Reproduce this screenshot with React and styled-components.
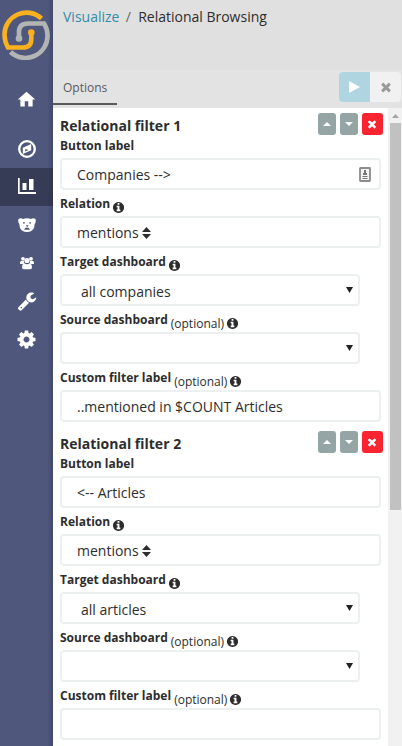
import React from "react";
import styled, { createGlobalStyle } from "styled-components";
import { MdHome } from "react-icons/md";

const Global = createGlobalStyle`
  * { box-sizing: border-box; }
  body { margin: 0; background: #fff; color: #2d2d2d; font-family: "Open Sans", "Noto Sans", sans-serif; font-size: 14px; overflow: hidden; }
  svg { display: block; flex: none; }
`;

const Page = styled.div`display: flex; width: 402px; height: 746px; overflow: hidden;`;
const Sidebar = styled.nav`
  width: 53px; flex: none; color: #fff;
  background: linear-gradient(to right, transparent 47px, rgba(25, 30, 60, 0.25)), #4f587c;
`;
const LogoBox = styled.div`height: 80px; padding: 10px 0 0 1px;`;
const NavItem = styled.a`
  display: flex; align-items: center; justify-content: center; height: 38px;
  margin-bottom: ${(p) => p.$gap || 0}px;
  background: ${(p) => (p.$active ? "rgba(32, 32, 48, 0.5)" : "transparent")};
`;
const Main = styled.main`flex: 1; min-width: 0; display: flex; flex-direction: column;`;
const Breadcrumb = styled.header`
  height: 70px; background: #e0e0e0; padding: 7px 10px; line-height: 20px; white-space: pre;
  a { color: #328caa; }
  i { color: #666; font-style: normal; margin: 0 0 0 -1px; }
`;
const Toolbar = styled.div`
  height: 38px; background: #e3e3e3; display: flex; justify-content: space-between; padding-right: 1px;
`;
const Tab = styled.div`
  width: 64px; height: 35px; border-bottom: 2px solid #5a5a5a; color: #5a5a5a;
  font-size: 12px; line-height: 35px; padding-left: 10px;
`;
const Actions = styled.div`display: flex; margin-top: 2px; height: 30px; border-radius: 4px; overflow: hidden;`;
const Action = styled.button`
  width: 31px; border: 0; padding: 0; display: flex; align-items: center; justify-content: center;
  background: ${(p) => (p.$primary ? "#afd5e1" : "#f1f1f1")}; color: ${(p) => (p.$primary ? "#fff" : "#999")};
`;
const Body = styled.div`flex: 1; min-height: 0; display: flex;`;
const Form = styled.form`flex: 1; min-width: 0; padding: 0 5px 0 7px; overflow: hidden;`;
const Filter = styled.section`
  height: 318px;
  &:first-child { margin-top: -4px; }
`;
const FilterHead = styled.div`display: flex; justify-content: space-between; height: 28px; padding-top: 9px;`;
const Title = styled.h2`margin: 3px 0 0; font-size: 14px; line-height: 20px; font-weight: 700;`;
const Buttons = styled.div`display: flex; gap: 4px;`;
const MiniButton = styled.button`
  width: ${(p) => (p.$danger ? 21 : 18)}px; height: 22px; border: 0; border-radius: 3px; padding: 0;
  display: flex; align-items: center; justify-content: center; color: #fff;
  background: ${(p) => (p.$danger ? "#fa2530" : "#95a5a6")};
  svg { margin-right: ${(p) => (p.$danger ? 1 : 0)}px; }
`;
const Label = styled.label`
  height: 26px; display: flex; font-size: 12px; line-height: 16px; padding-top: 6px; white-space: nowrap;
  b { font-weight: 700; }
`;
const Hint = styled.span`
  display: flex; gap: 3px; padding-top: 4px; margin-left: ${(p) => (p.$wide ? 3 : 2)}px;
  svg { margin: 1px 0 0 ${(p) => (p.$wide ? -1 : 0)}px; }
`;
const Field = styled.div`
  height: 32px; width: ${(p) => (p.$select ? 300 : 321)}px; border: 2px solid #ecf0f1; border-radius: 4px;
  display: flex; align-items: center; line-height: 21px; white-space: pre;
  padding: ${(p) => (p.$select ? "3px 8px 0 19px" : "1px 8px 0 15px")};
  > span { flex: ${(p) => (p.$inline ? "none" : 1)}; }
`;
const Arrow = styled.svg`margin: -4px -3px 0 0;`;
const Scrollbar = styled.div`
  width: 14px; background: #f1f1f1; display: flex; flex-direction: column; align-items: center;
  svg { margin: 6px 0 5px; }
`;
const Thumb = styled.div`width: 11px; height: 387px; background: #c1c1c1; margin-left: 1px;`;

const paths = {
  times: "M1490 1322q0 40-28 68l-136 136q-28 28-68 28t-68-28l-294-294-294 294q-28 28-68 28t-68-28l-136-136q-28-28-28-68t28-68l294-294-294-294q-28-28-28-68t28-68l136-136q28-28 68-28t68 28l294 294 294-294q28-28 68-28t68 28l136 136q28 28 28 68t-28 68l-294 294 294 294q28 28 28 68z",
  info: "M1152 1376v-160q0-14-9-23t-23-9h-96v-512q0-14-9-23t-23-9h-320q-14 0-23 9t-9 23v160q0 14 9 23t23 9h96v320h-96q-14 0-23 9t-9 23v160q0 14 9 23t23 9h448q14 0 23-9t9-23zm-128-896v-160q0-14-9-23t-23-9h-192q-14 0-23 9t-9 23v160q0 14 9 23t23 9h192q14 0 23-9t9-23zm640 416q0 209-103 385.5t-279.5 279.5-385.5 103-385.5-103-279.5-279.5-103-385.5 103-385.5 279.5-279.5 385.5-103 385.5 103 279.5 279.5 103 385.5z",
  wrench: "M448 1472q0-26-19-45t-45-19-45 19-19 45 19 45 45 19 45-19 19-45zm644-420l-682 682q-37 37-90 37-52 0-91-37l-106-108q-38-36-38-90 0-53 38-91l681-681q39 98 114.500 173.500t173.500 114.500zm634-435q0 39-23 106-47 134-164.500 217.500t-258.500 83.500q-185 0-316.500-131.500t-131.500-316.500 131.500-316.500 316.500-131.500q58 0 121.500 16.500t107.500 46.500q16 11 16 28t-16 28l-293 169v224l193 107q5-3 79-48.500t135.500-81 70.500-35.500q15 0 23.500 10t8.500 25z",
  cog: "M1152 896q0-106-75-181t-181-75-181 75-75 181 75 181 181 75 181-75 75-181zm512-109v222q0 12-8 23t-20 13l-185 28q-19 54-39 91 35 50 107 138 10 12 10 25t-9 23q-27 37-99 108t-94 71q-12 0-26-9l-138-108q-44 23-91 38-16 136-29 186-7 28-36 28h-222q-14 0-24.500-8.500t-11.500-21.500l-28-184q-49-16-90-37l-141 107q-10 9-25 9-14 0-25-11-126-114-165-168-7-10-7-23 0-12 8-23 15-21 51-66.500t54-70.500q-27-50-41-99l-183-27q-13-2-21-12.500t-8-23.500v-222q0-12 8-23t19-13l186-28q14-46 39-92-40-57-107-138-10-12-10-24 0-10 9-23 26-36 98.500-107.500t94.500-71.500q13 0 26 10l138 107q44-23 91-38 16-136 29-186 7-28 36-28h222q14 0 24.500 8.500t11.500 21.500l28 184q49 16 90 37l142-107q9-9 24-9 13 0 25 10 129 119 165 170 7 8 7 22 0 12-8 23-15 21-51 66.500t-54 70.500q26 50 41 98l183 28q13 2 21 12.500t8 23.500z",
};
const Glyph = ({ name, size }) => (
  <svg width={size} height={size} viewBox="0 0 1792 1792" fill="currentColor"><path d={paths[name]} /></svg>
);

const Logo = () => (
  <svg width="50" height="50" viewBox="0 0 50 50" fill="none" strokeWidth="4.600">
    <path d="M40.500 8.500A22 22 0 0 0 3.500 25Q3.500 31 7 37.500H22Q30.300 37.500 30.300 29V22" stroke="#fbb01e" />
    <path d="M9.500 42A22 22 0 0 0 46.500 25Q46.500 19 43 13.500H27Q18 13.500 18 22V29" stroke="#b3b5b5" />
    <circle cx="30.300" cy="22.500" r="3.300" fill="#fbb01e" stroke="none" />
    <circle cx="18" cy="28.500" r="3.300" fill="#b3b5b5" stroke="none" />
  </svg>
);
const Compass = () => (
  <svg width="18" height="18" viewBox="0 0 18 18" fill="none" stroke="#fff">
    <circle cx="9" cy="9" r="7.800" strokeWidth="2.300" />
    <path fill="#fff" stroke="none" fillRule="evenodd" d="M13.200 4v6.300L4.800 14V7.700ZM7.200 9v2.500l3.400-1.600Z" />
  </svg>
);
const Chart = () => (
  <svg width="18" height="18" viewBox="0 0 18 18" fill="#fff">
    <path d="M0 0h1.700v14H18v2H0zM4.500 5h4v7h-4zM11 1h4.500v11H11z" />
  </svg>
);
const Bear = () => (
  <svg width="18" height="16" viewBox="0 0 18 16">
    <path fill="#fff" d="M.5 2Q3 .5 5 2Q9 .5 13 2Q15 .5 17.500 2Q18.300 5 16.700 7L16 11Q14 15 9 15Q4 15 2 11L1.300 7Q-.3 5 .5 2Z" />
    <path fill="#4f587c" d="M5 5.200h1.800v1.200H5zM11.200 5.200H13v1.200h-1.800zM8 8.200h2.500l-.7 1.500h-1zM6.200 12.800Q6.500 10.500 9 10.500T11.800 12.800Z" />
  </svg>
);
const Users = () => (
  <svg width="14" height="14" viewBox="0 0 14 14" fill="#fff">
    <circle cx="3" cy="2.800" r="1.900" /><circle cx="11" cy="2.800" r="1.900" /><circle cx="7" cy="4.500" r="2.600" />
    <path d="M0 7.500V6.500Q0 4.800 1.500 5H4Q4 7 4.500 7.500L3 8H1Q0 8 0 7.500ZM14 7.500V6.500Q14 4.800 12.500 5H10Q10 7 9.500 7.500L11 8h2q1 0 1-.5ZM2 11.500q0-4 2.700-4Q7 9 9.300 7.500q2.700 0 2.700 4 0 1.800-1.700 1.800H3.700Q2 13.300 2 11.500Z" />
  </svg>
);
const Caret = ({ down }) => (
  <svg width="8" height="4" viewBox="0 0 8 4" fill="#fff"><path d={down ? "M0 0h8L4 4z" : "M0 4h8L4 0z"} /></svg>
);
const Sort = () => (
  <svg width="9" height="12" viewBox="0 0 9 12" fill="#2d2d2d"><path d="M0 5h9L4.500 0zM0 7h9l-4.500 5z" /></svg>
);
const Contact = () => (
  <svg width="12" height="16" viewBox="0 0 12 16">
    <rect x="1" y="1" width="10" height="13" rx=".5" fill="#f4f4f4" stroke="#8c8c8c" strokeWidth="1.800" />
    <path fill="#777" d="M5 3h2v3h1v2H4V6h1zM3.500 9h5v1h-5zM3.500 11h5v1h-5z" />
  </svg>
);
const Down = () => <Arrow width="7" height="6" viewBox="0 0 7 6"><path fill="#222" d="M0 0h7L3.500 6z" /></Arrow>;

const FieldLabel = ({ text, optional, info }) => (
  <Label>
    <b>{text}</b>
    {(optional || info) && (
      <Hint $wide={optional}>{optional && <span>(optional)</span>}<Glyph name="info" size={13} /></Hint>
    )}
  </Label>
);

const RelationalFilter = ({ n, button, contact, target, custom }) => (
  <Filter>
    <FilterHead>
      <Title>Relational filter {n}</Title>
      <Buttons>
        <MiniButton type="button"><Caret /></MiniButton>
        <MiniButton type="button"><Caret down /></MiniButton>
        <MiniButton type="button" $danger><Glyph name="times" size={12} /></MiniButton>
      </Buttons>
    </FilterHead>
    <FieldLabel text="Button label" />
    <Field><span>{button}</span>{contact && <Contact />}</Field>
    <FieldLabel text="Relation" info />
    <Field $inline><span>mentions </span><Sort /></Field>
    <FieldLabel text="Target dashboard" info />
    <Field $select><span>{target}</span><Down /></Field>
    <FieldLabel text="Source dashboard" optional />
    <Field $select><span /><Down /></Field>
    <FieldLabel text="Custom filter label" optional />
    <Field><span>{custom}</span></Field>
  </Filter>
);

export default function App() {
  return (
    <Page>
      <Global />
      <Sidebar>
        <LogoBox><Logo /></LogoBox>
        <NavItem $gap={12}><MdHome size={21} /></NavItem>
        <NavItem><Compass /></NavItem>
        <NavItem $active><Chart /></NavItem>
        <NavItem><Bear /></NavItem>
        <NavItem><Users /></NavItem>
        <NavItem><Glyph name="wrench" size={20} /></NavItem>
        <NavItem><Glyph name="cog" size={21} /></NavItem>
      </Sidebar>
      <Main>
        <Breadcrumb><a>Visualize</a> <i> / </i> <span>Relational Browsing</span></Breadcrumb>
        <Toolbar>
          <Tab>Options</Tab>
          <Actions>
            <Action $primary><svg width="11" height="12" viewBox="0 0 11 12" fill="currentColor"><path d="M0 0l11 6-11 6z" /></svg></Action>
            <Action><Glyph name="times" size={14} /></Action>
          </Actions>
        </Toolbar>
        <Body>
          <Form>
            <RelationalFilter n={1} button="Companies -->" contact target="all companies" custom="..mentioned in $COUNT Articles" />
            <RelationalFilter n={2} button="<-- Articles" target="all articles" custom="" />
          </Form>
          <Scrollbar>
            <svg width="7" height="4" viewBox="0 0 7 4" fill="#a3a3a3"><path d="M0 4h7L3.500 0z" /></svg>
            <Thumb />
          </Scrollbar>
        </Body>
      </Main>
    </Page>
  );
}
